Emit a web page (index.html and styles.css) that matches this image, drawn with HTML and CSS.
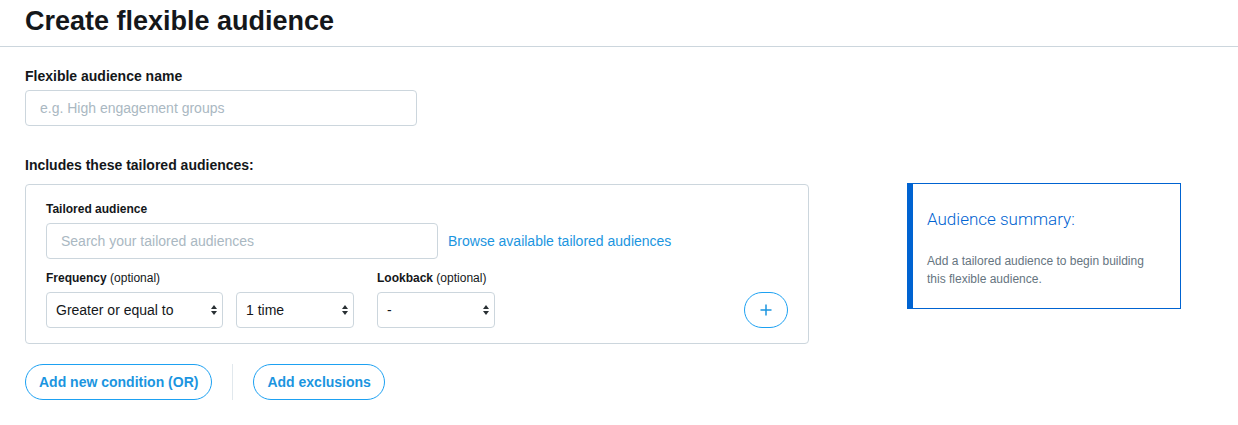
FILE: index.html
```html
<!DOCTYPE html>
<html lang="en">
<head>
    <meta charset="UTF-8">
    <meta name="viewport" content="width=device-width, initial-scale=1.0">
    <title>Create flexible audience</title>
    <link rel="stylesheet" href="styles.css">
</head>
<body>
    <header class="page-header">
        <h1>Create flexible audience</h1>
    </header>
    <main class="page">
        <div class="form-col">
            <label class="field-label" for="audienceName">Flexible audience name</label>
            <input type="text" id="audienceName" class="text-input name-input" placeholder="e.g. High engagement groups">

            <div class="section-label">Includes these tailored audiences:</div>
            <div class="condition-box">
                <div class="small-label">Tailored audience</div>
                <div class="search-row">
                    <input type="text" class="text-input search-input" placeholder="Search your tailored audiences">
                    <a href="#" class="browse-link">Browse available tailored audiences</a>
                </div>
                <div class="select-row">
                    <div class="select-group">
                        <div class="small-label">Frequency <span class="optional">(optional)</span></div>
                        <div class="select-pair">
                            <div class="select select-wide">
                                <span>Greater or equal to</span>
                                <svg class="arrows" width="6" height="10" viewBox="0 0 6 10"><path d="M0 4 L3 0 L6 4 Z M0 6 L3 10 L6 6 Z" fill="#292f33"/></svg>
                            </div>
                            <div class="select">
                                <span>1 time</span>
                                <svg class="arrows" width="6" height="10" viewBox="0 0 6 10"><path d="M0 4 L3 0 L6 4 Z M0 6 L3 10 L6 6 Z" fill="#292f33"/></svg>
                            </div>
                        </div>
                    </div>
                    <div class="select-group">
                        <div class="small-label">Lookback <span class="optional">(optional)</span></div>
                        <div class="select">
                            <span>-</span>
                            <svg class="arrows" width="6" height="10" viewBox="0 0 6 10"><path d="M0 4 L3 0 L6 4 Z M0 6 L3 10 L6 6 Z" fill="#292f33"/></svg>
                        </div>
                    </div>
                    <button class="plus-btn" type="button" aria-label="Add">
                        <svg width="12" height="12" viewBox="0 0 12 12"><path d="M6 0.5 V11.5 M0.5 6 H11.5" stroke="#1b95e0" stroke-width="1.5"/></svg>
                    </button>
                </div>
            </div>

            <div class="actions">
                <button class="pill-btn" type="button">Add new condition (OR)</button>
                <span class="divider"></span>
                <button class="pill-btn" type="button">Add exclusions</button>
            </div>
        </div>

        <aside class="summary">
            <h2>Audience summary:</h2>
            <p>Add a tailored audience to begin building this flexible audience.</p>
        </aside>
    </main>
</body>
</html>
```

FILE: styles.css
```css
body {
    margin: 0;
    font-family: "Liberation Sans", Arial, sans-serif;
    color: #14171a;
    background: #fff;
}
.page-header {
    padding: 8px 25px 11px;
    border-bottom: 1px solid #ccd6dd;
}
.page-header h1 {
    margin: 0;
    font-size: 27px;
    line-height: 27px;
    font-weight: bold;
}
.page {
    display: flex;
    align-items: flex-start;
    gap: 98px;
    padding-left: 25px;
}
.form-col {
    width: 784px;
    padding-top: 20px;
}
.field-label,
.section-label {
    display: block;
    font-size: 14px;
    line-height: 18px;
    font-weight: bold;
}
.field-label {
    margin-bottom: 5px;
}
.section-label {
    margin-top: 30px;
    margin-bottom: 10px;
}
.text-input {
    box-sizing: border-box;
    height: 36px;
    padding: 0 14px;
    border: 1px solid #ccd6dd;
    border-radius: 4px;
    font-family: inherit;
    font-size: 14px;
    color: #14171a;
    outline: none;
}
.text-input::placeholder {
    color: #aab8c2;
}
.name-input {
    display: block;
    width: 392px;
}
.condition-box {
    box-sizing: border-box;
    height: 160px;
    padding: 16px 20px 0;
    border: 1px solid #ccd6dd;
    border-radius: 4px;
}
.small-label {
    font-size: 12px;
    line-height: 16px;
    font-weight: bold;
    margin-bottom: 6px;
}
.optional {
    font-weight: normal;
}
.search-row {
    display: flex;
    align-items: center;
    gap: 10px;
}
.search-input {
    width: 392px;
}
.browse-link {
    font-size: 14px;
    color: #1b95e0;
    text-decoration: none;
}
.select-row {
    display: flex;
    align-items: flex-end;
    margin-top: 11px;
}
.select-group {
    margin-right: 23px;
}
.select-pair {
    display: flex;
    gap: 13px;
}
.select {
    box-sizing: border-box;
    width: 118px;
    height: 36px;
    display: flex;
    align-items: center;
    justify-content: space-between;
    padding: 0 5px 0 9px;
    border: 1px solid #ccd6dd;
    border-radius: 4px;
    font-size: 14px;
}
.select-wide {
    width: 177px;
}
.plus-btn {
    margin-left: auto;
    box-sizing: border-box;
    width: 44px;
    height: 36px;
    padding: 0;
    display: flex;
    align-items: center;
    justify-content: center;
    background: #fff;
    border: 1px solid #1da1f2;
    border-radius: 18px;
    cursor: pointer;
}
.actions {
    display: flex;
    align-items: center;
    gap: 20px;
    margin-top: 20px;
}
.pill-btn {
    height: 36px;
    padding: 0 13px;
    background: #fff;
    border: 1px solid #1da1f2;
    border-radius: 18px;
    font-family: inherit;
    font-size: 14px;
    font-weight: bold;
    color: #1b95e0;
    cursor: pointer;
}
.divider {
    width: 1px;
    height: 36px;
    background: #e1e8ed;
}
.summary {
    box-sizing: border-box;
    width: 274px;
    height: 126px;
    margin-top: 136px;
    padding: 24px 30px 0 14px;
    border: 1px solid #0063d1;
    border-left: 6px solid #0063d1;
}
.summary h2 {
    margin: 0;
    font-family: Roboto, "Liberation Sans", sans-serif;
    font-weight: 300;
    font-size: 17px;
    line-height: 22px;
    color: #0063d1;
}
.summary p {
    margin: 22px 0 0;
    font-size: 12px;
    line-height: 18px;
    color: #66757f;
}
```
